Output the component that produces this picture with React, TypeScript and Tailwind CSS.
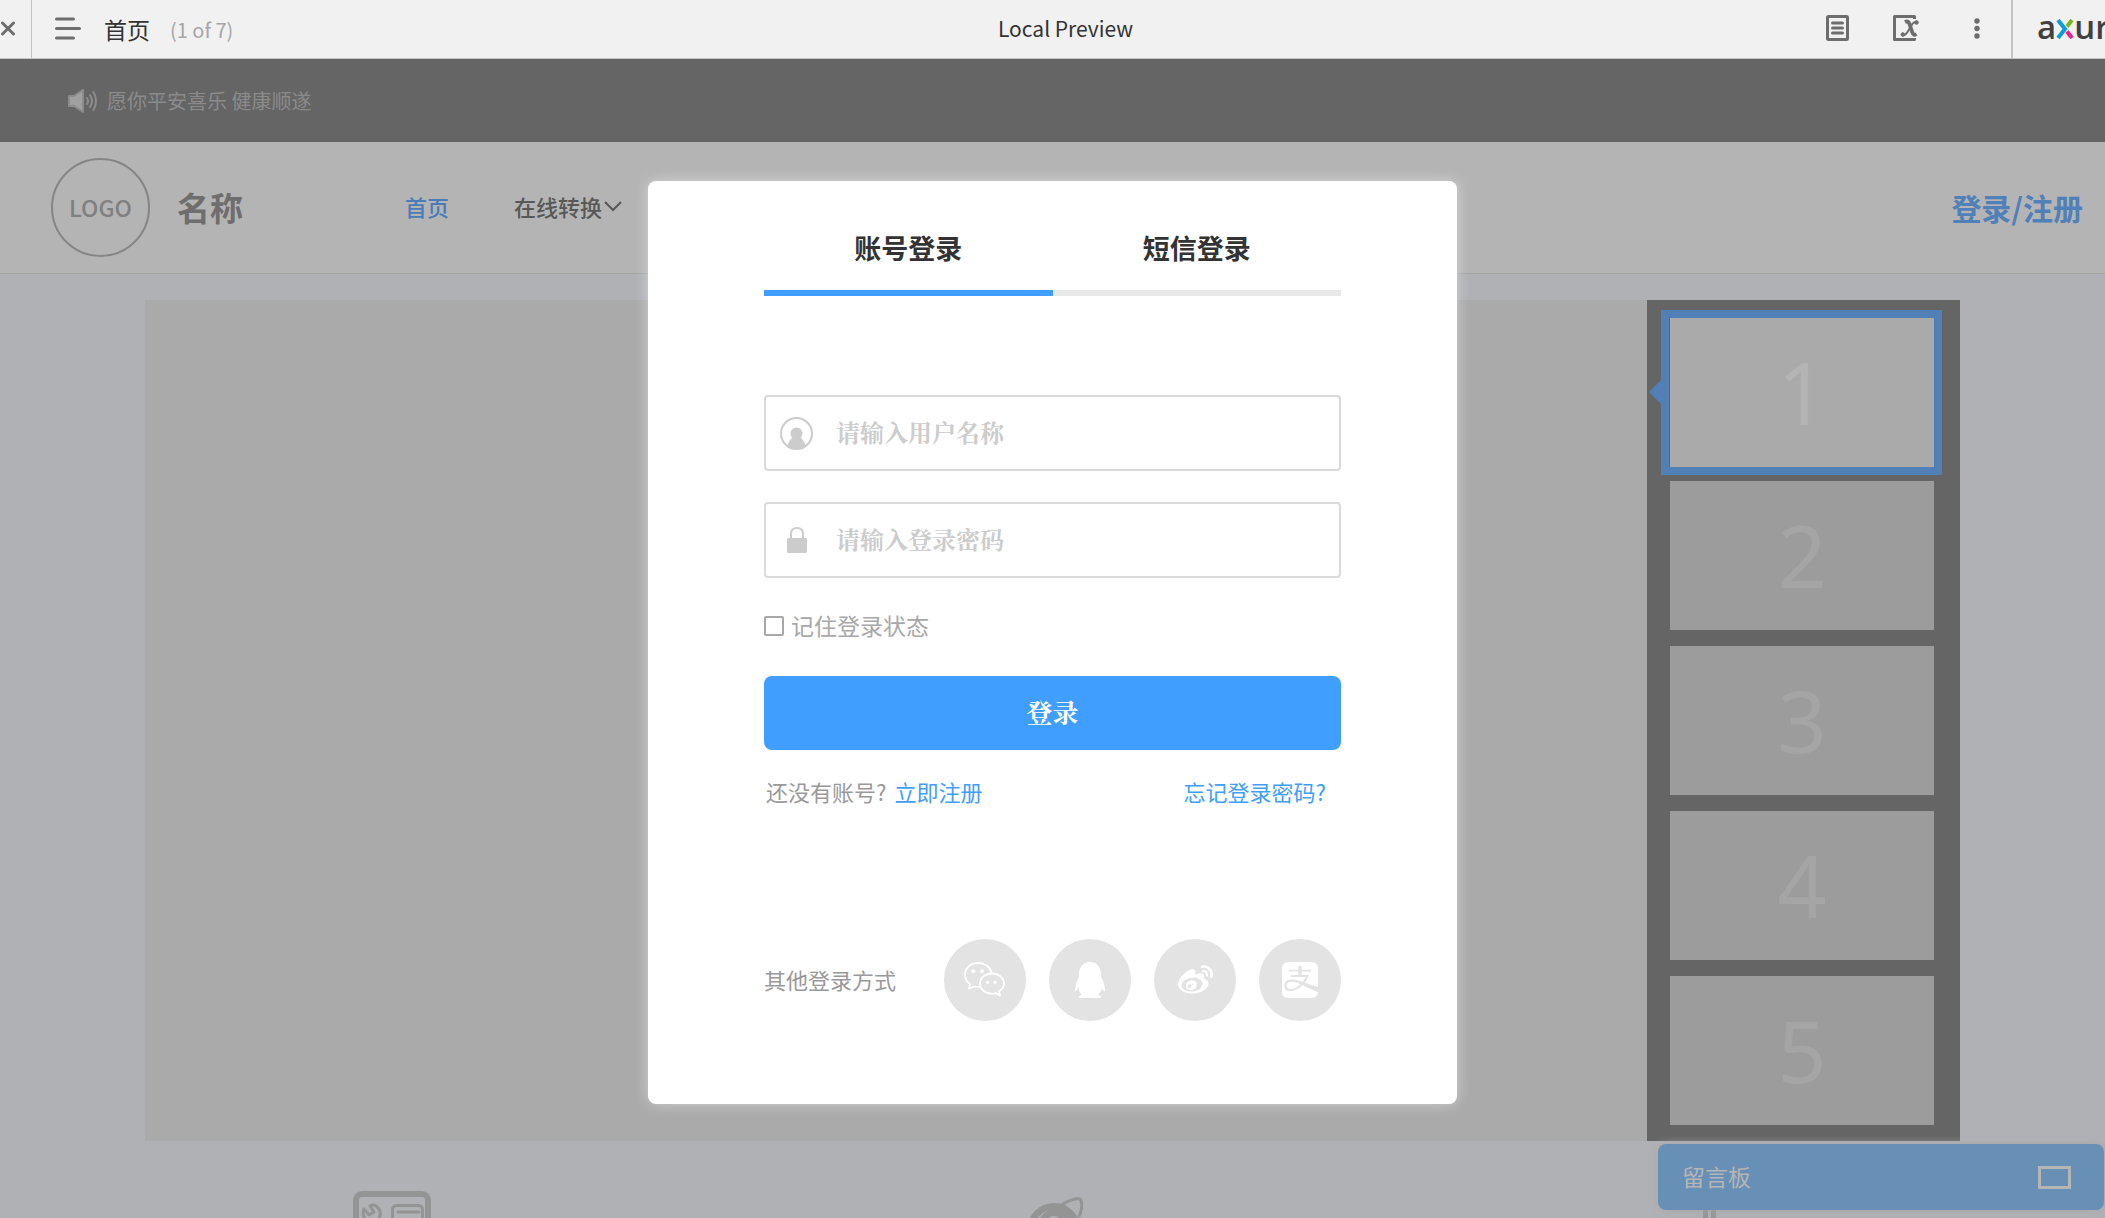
import React from "react";
import { FaQq, FaWeibo } from "react-icons/fa";

function PlayerBar() {
  return (
    <header className="flex h-[59px] shrink-0 items-stretch border-b border-[#c4c4c4] bg-[#f1f1f1] text-[#6d6d6d]">
      <div className="flex flex-1 basis-0 items-center">
        <div className="flex h-full w-8 items-center border-r border-[#c4c4c4]">
          <button type="button" aria-label="Close">
            <svg width="16" height="16" viewBox="0 0 16 16" fill="none" stroke="currentColor" strokeWidth="3" strokeLinecap="round">
              <path d="M2.5 2l11 11M13.5 2l-11 11" />
            </svg>
          </button>
        </div>
        <button type="button" aria-label="Pages" className="ml-[23px]">
          <svg width="26" height="24" viewBox="0 0 26 24" fill="none" stroke="currentColor" strokeWidth="3" strokeLinecap="round">
            <path d="M1.5 2h17M1.5 11.500h23M1.5 21h17" />
          </svg>
        </button>
        <span className="ml-[23px] text-[23px] text-[#333]">首页</span>
        <span className="ml-5 pt-0.5 text-[20px] text-[#a6a6a6]">(1 of 7)</span>
      </div>
      <div className="flex items-center pl-[26px] text-[21px] text-[#333]">Local Preview</div>
      <div className="flex flex-1 basis-0 items-stretch justify-end overflow-hidden">
        <div className="flex items-center pr-[30px] pb-0.5">
          <button type="button" aria-label="Notes">
            <svg width="23" height="26" viewBox="0 0 23 26" fill="none" stroke="currentColor" strokeWidth="3">
              <rect x="1.5" y="1.5" width="20" height="23" rx="1" />
              <path d="M6.5 8h10M6.5 13h10M6.5 18h10" strokeLinecap="round" />
            </svg>
          </button>
          <button type="button" aria-label="Variables" className="ml-[44px]">
            <svg width="27" height="26" viewBox="0 0 27 26" fill="none" stroke="currentColor">
              <path d="M21.500 4V1.5H1.5v23h20V23" strokeWidth="3" strokeLinejoin="round" />
              <path d="M12 7q3-1.500 4.300 1.500l3 9q1.200 3.500 4.200 1.500" strokeWidth="3.800" />
              <path d="M9.500 20q2.500 1 5-3l4.500-7.500q2-3 4-2.500" strokeWidth="2" />
              <circle cx="9.800" cy="19.500" r="1.800" fill="currentColor" />
              <circle cx="23.500" cy="7.500" r="1.800" fill="currentColor" />
            </svg>
          </button>
          <button type="button" aria-label="More" className="ml-[53px]">
            <svg width="8" height="22" viewBox="0 0 8 22" fill="currentColor">
              <circle cx="4" cy="4" r="2.700" />
              <circle cx="4" cy="11.500" r="2.700" />
              <circle cx="4" cy="19" r="2.700" />
            </svg>
          </button>
        </div>
        <a href="#" aria-label="axure" className="flex w-[94px] shrink-0 items-center border-l-2 border-[#c4c4c4] pl-6 font-['Open_Sans',sans-serif] text-[33px] leading-none font-semibold text-[#414141]">
          <span className="pb-[5px]">a</span>
          <svg width="18" height="20" viewBox="0 0 18 20" className="shrink-0" fill="none" strokeWidth="4">
            <path d="M2 1l7 9-7 9" stroke="#0a9ddb" />
            <path d="M16 1l-5 6.500" stroke="#78b81c" />
            <path d="M11 12.500l5 6.500" stroke="#ec1c8c" />
          </svg>
          <span className="pb-[5px]">ur</span>
        </a>
      </div>
    </header>
  );
}

function SiteHeader() {
  return (
    <>
      <div className="flex h-[83px] shrink-0 items-center bg-[#656565] pl-[68px] text-[20px] text-[#8b8b8b]">
        <svg width="30" height="24" viewBox="0 0 30 24" fill="none" stroke="#8c8c8c" strokeWidth="2" strokeLinecap="round">
          <path d="M1 7h5l9-6v22l-9-6H1z" fill="#a0a0a0" strokeLinejoin="round" />
          <path d="M19 9q2 3 0 6M22 6q4 6 0 12M25.500 3q5 9 0 18" />
        </svg>
        <span className="ml-[9px]">愿你平安喜乐 健康顺遂</span>
      </div>
      <div className="flex h-[132px] shrink-0 items-center border-b border-[#a3a5a5] bg-[#b4b4b4] pr-[22px] pl-[51px]">
        <div className="flex size-[99px] items-center justify-center rounded-full border-2 border-[#858585] font-['Noto_Sans_CJK_SC',sans-serif] text-[23px] font-medium text-[#808080]">
          LOGO
        </div>
        <span className="ml-[27px] text-[33px] font-bold text-[#6e6e6e]">名称</span>
        <nav className="ml-[162px] flex items-center gap-[65px] pb-[3px] text-[22px] font-medium text-[#585858]">
          <a href="#" className="text-[#4a7cb8]">首页</a>
          <a href="#" className="flex items-center gap-0.5">
            在线转换
            <svg width="18" height="11" viewBox="0 0 18 11" fill="none" stroke="currentColor" strokeWidth="2">
              <path d="M1 1l8 8 8-8" />
            </svg>
          </a>
        </nav>
        <a href="#" className="ml-auto text-[30px] font-bold text-[#5080b8]">登录/注册</a>
      </div>
    </>
  );
}

function Carousel() {
  return (
    <section className="mx-[145px] mt-[26px] flex shrink-0">
      <div className="flex-1 bg-[#aaaaaa]" />
      <div className="flex w-[313px] flex-col bg-[#656565] pt-[10px] pb-4 font-['Noto_Sans',sans-serif] text-[86px] leading-none">
        <button type="button" className="relative mr-[18px] ml-[14px] border-8 border-[#5080b5] pl-px">
          <svg width="12" height="24" viewBox="0 0 12 24" className="absolute top-[62px] -left-5" fill="#5080b5">
            <path d="M12 0v24L0 12z" />
          </svg>
          <span className="flex h-[149px] items-center justify-center bg-[#aaaaaa] pb-0.5 text-[#b4b4b4]">1</span>
        </button>
        <div className="mt-[6px] mr-[26px] ml-[23px] flex flex-col gap-4">
          {[2, 3, 4, 5].map((n) => (
            <button key={n} type="button" className="flex h-[149px] items-center justify-center bg-[#9c9c9c] pb-0.5 text-[#a5a5a5]">
              {n}
            </button>
          ))}
        </div>
      </div>
    </section>
  );
}

function FeatureIcons() {
  return (
    <section className="flex shrink-0 justify-between px-[353px] pt-[50px] text-[#949494]">
      <svg width="78" height="64" viewBox="0 0 78 64" fill="none" stroke="currentColor">
        <rect x="3" y="3" width="72" height="58" rx="6" strokeWidth="6" />
        <rect x="39.500" y="14.500" width="30" height="30" rx="4" strokeWidth="3" />
        <path d="M45 21h21M45 29h21" strokeWidth="3" strokeLinecap="round" />
        <path d="M17 15l4 6-5 3-5-6q-3 8 4 13l10 13 4-3-5-10q7-10-1-16-3-2-6 0z" strokeWidth="3" strokeLinejoin="round" />
      </svg>
      <svg width="66" height="64" viewBox="0 0 66 64" fill="none">
        <circle cx="37" cy="39" r="27" fill="currentColor" />
        <circle cx="37" cy="33" r="8" fill="#b0b1b5" />
        <path d="M17 33q4-9 14-14-9 7-12 14z" fill="#b0b1b5" />
        <path d="M43 15Q56 6 63 8q4 5-1 18" stroke="currentColor" strokeWidth="3" />
      </svg>
      <svg width="84" height="64" viewBox="0 0 84 64" fill="currentColor">
        <path d="M35 10h5v50h-5zM43 10h5v50h-5z" />
      </svg>
    </section>
  );
}

function WechatIcon() {
  return (
    <svg width="42" height="36" viewBox="0 0 42 36" fill="none" stroke="currentColor" strokeWidth="1.800" strokeLinejoin="round">
      <path d="M27.500 10.500C26 4.500 20.500 1 14 1 6.500 1 1 6 1 12.800c0 4.200 2 7.200 5 9.500l-1 4.200 5-2q3 .6 6.500.3" />
      <path d="M28 11.500c-6.500 0-12 4.200-12 10s5.500 10.200 12 10.200q2 0 4-.6l4 2.400-1-4q5-3 5-8c0-5.800-5.500-10-12-10z" />
      <g fill="currentColor" stroke="none">
        <circle cx="9.300" cy="9.300" r="2" />
        <circle cx="18" cy="9.300" r="2" />
        <circle cx="23.500" cy="20.300" r="1.600" />
        <circle cx="31" cy="20.300" r="1.600" />
      </g>
    </svg>
  );
}

function AlipayIcon() {
  return (
    <svg width="36" height="36" viewBox="0 0 36 36" fill="none" stroke="#e3e3e3">
      <rect width="36" height="36" rx="6" fill="currentColor" stroke="none" />
      <path d="M7 8.700h22M8.500 14h18" strokeWidth="1.800" />
      <path d="M18 4v10" strokeWidth="3.500" />
      <path d="M25.500 13.500Q23 20.500 17 25c-5 4-13.500 4.500-13.500-1.200C3.500 17.500 12 17.500 18 20.500" strokeWidth="2.200" />
      <path d="M14 18l22 7v5.500L16 21z" fill="#e3e3e3" stroke="none" />
    </svg>
  );
}

const socials = [
  { name: "微信", icon: <WechatIcon /> },
  { name: "QQ", icon: <FaQq size={36} /> },
  { name: "微博", icon: <FaWeibo size={35} /> },
  { name: "支付宝", icon: <AlipayIcon /> },
];

function LoginDialog() {
  return (
    <div
      role="dialog"
      aria-label="登录"
      className="absolute inset-x-0 top-[181px] mx-auto w-[809px] rounded-lg bg-white px-[116px] pt-[37px] pb-[83px] shadow-[0_0_14px_rgba(255,255,255,0.45)]"
    >
      <div role="tablist" className="flex text-[27px] font-bold text-[#333]">
        <button type="button" role="tab" aria-selected="true" className="h-[78px] flex-1 border-b-6 border-[#409eff] pb-3">
          账号登录
        </button>
        <button type="button" role="tab" aria-selected="false" className="h-[78px] flex-1 border-b-6 border-[#e8e8e8] pb-3">
          短信登录
        </button>
      </div>

      <form className="mt-[99px]">
        <label className="flex h-[76px] items-center rounded border-2 border-[#dadada] pl-[14px] text-[#cccccc]">
          <svg width="33" height="33" viewBox="0 0 33 33" className="shrink-0" fill="currentColor">
            <circle cx="16.500" cy="16.500" r="15.500" fill="none" stroke="currentColor" strokeWidth="2" />
            <circle cx="16.500" cy="16.500" r="6" />
            <path d="M7.500 29q1.500-7 6-8.500h6q4.500 1.500 6 8.500-9 6-18 0z" />
          </svg>
          <input
            type="text"
            aria-label="用户名称"
            placeholder="请输入用户名称"
            className="ml-[23px] min-w-0 flex-1 pb-0.5 font-['Noto_Serif_CJK_SC','Noto_Sans_CJK_SC',serif] text-[24px] font-bold text-[#333] outline-none placeholder:text-[#cccccc]"
          />
        </label>
        <label className="mt-[31px] flex h-[76px] items-center rounded border-2 border-[#dadada] pl-[14px] text-[#cccccc]">
          <svg width="33" height="26" viewBox="0 0 33 26" className="shrink-0" fill="currentColor">
            <rect x="7" y="11" width="20" height="15" rx="1.500" />
            <path d="M11 12V7q0-6 6-6t6 6v5" fill="none" stroke="currentColor" strokeWidth="2" />
          </svg>
          <input
            type="password"
            aria-label="登录密码"
            placeholder="请输入登录密码"
            className="ml-[23px] min-w-0 flex-1 pb-0.5 font-['Noto_Serif_CJK_SC','Noto_Sans_CJK_SC',serif] text-[24px] font-bold text-[#333] outline-none placeholder:text-[#cccccc]"
          />
        </label>
        <label className="mt-[30px] flex h-9 items-center text-[23px] text-[#a8a8a8]">
          <input type="checkbox" className="mr-[7px] size-5 appearance-none rounded-xs border-2 border-[#a8a8a8] checked:bg-[#409eff]" />
          <span className="pb-0.5">记住登录状态</span>
        </label>
        <button type="submit" className="mt-8 h-[74px] w-full rounded-lg bg-[#409eff] pb-1 font-['Noto_Serif_CJK_SC','Noto_Sans_CJK_SC',serif] text-[26px] font-bold text-white">
          登录
        </button>
      </form>

      <div className="mt-[25px] mb-px flex h-8 items-center pr-[15px] pl-[2px] text-[22px] text-[#999]">
        <span>还没有账号?</span>
        <a href="#" className="ml-2 text-[#409eff]">立即注册</a>
        <a href="#" className="ml-auto text-[#409eff]">忘记登录密码?</a>
      </div>

      <div className="mt-[132px] flex items-center justify-between text-[22px] text-[#999]">
        <span className="pb-0.5">其他登录方式</span>
        <div className="flex gap-[23px]">
          {socials.map((s) => (
            <button key={s.name} type="button" aria-label={s.name} className="flex size-[82px] items-center justify-center rounded-full bg-[#e3e3e3] text-white">
              {s.icon}
            </button>
          ))}
        </div>
      </div>
    </div>
  );
}

export default function App() {
  return (
    <div className="relative flex h-screen flex-col overflow-hidden bg-[#b0b1b5] font-['Noto_Sans_CJK_SC',sans-serif]">
      <PlayerBar />
      <SiteHeader />
      <Carousel />
      <FeatureIcons />
      <button
        type="button"
        className="absolute right-px bottom-2 flex h-[66px] w-[446px] items-center justify-between rounded-lg bg-[#688fb5] pr-[33px] pl-[24px] text-[23px] text-[#b5b5b5] shadow-[0_0_8px_#a8a8a8]"
      >
        <span className="pb-0.5">留言板</span>
        <span className="h-[23px] w-[33px] border-3 border-[#b5b5b5]" />
      </button>
      <LoginDialog />
    </div>
  );
}
